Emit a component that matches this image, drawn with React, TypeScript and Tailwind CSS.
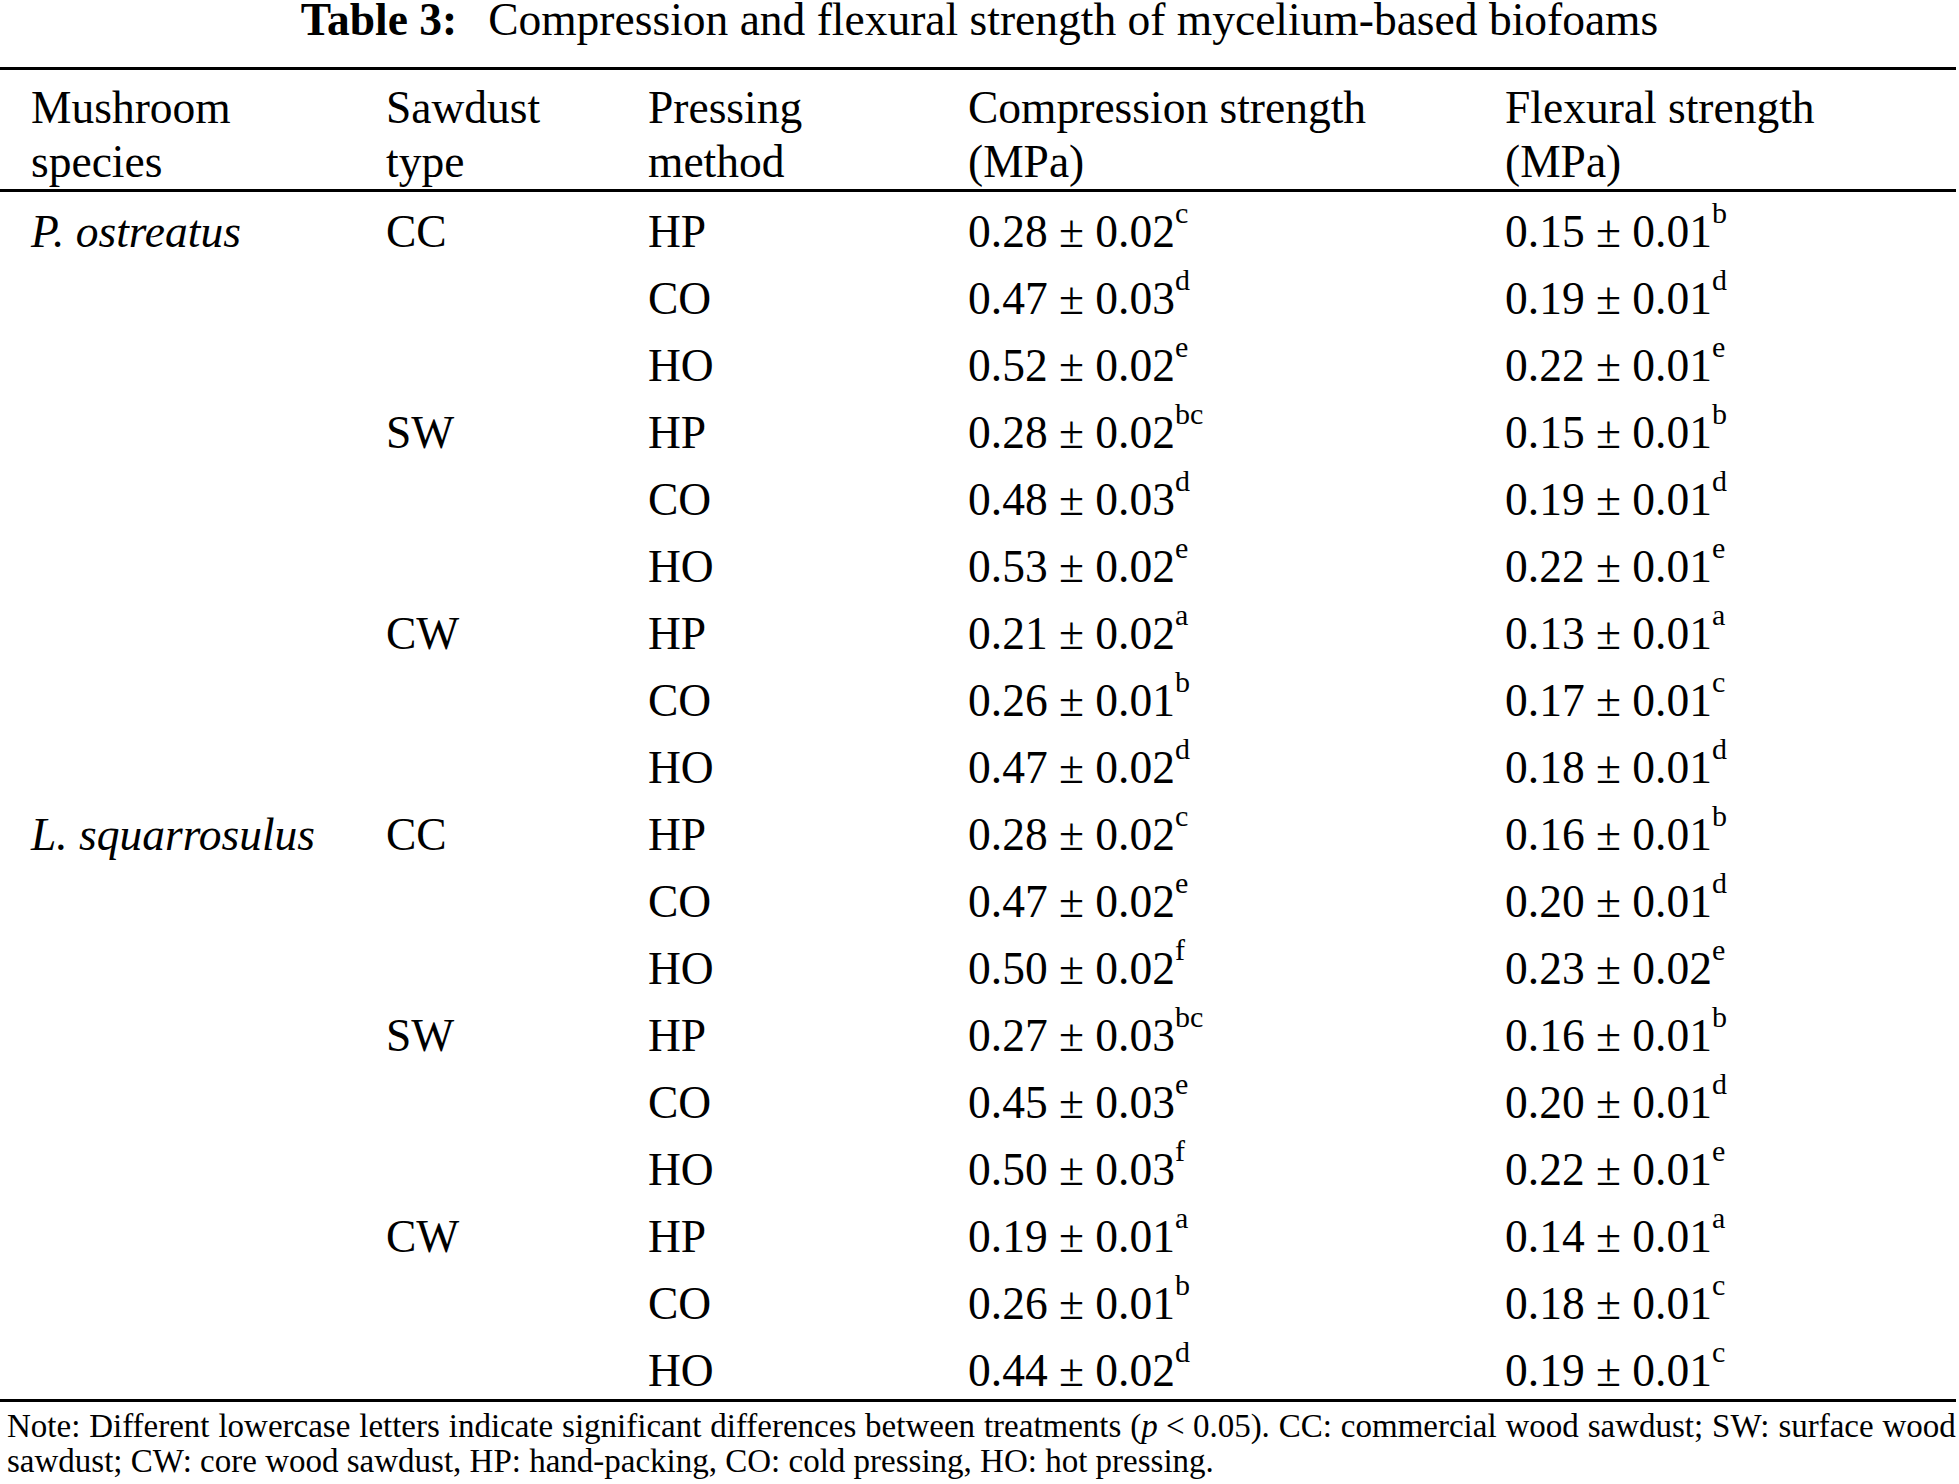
import React from "react";

type Row = {
  species?: string;
  sawdust?: string;
  method: string;
  comp: string;
  compSup: string;
  flex: string;
  flexSup: string;
};

const rows: Row[] = [
  { species: "P. ostreatus", sawdust: "CC", method: "HP", comp: "0.28 ± 0.02", compSup: "c", flex: "0.15 ± 0.01", flexSup: "b" },
  { method: "CO", comp: "0.47 ± 0.03", compSup: "d", flex: "0.19 ± 0.01", flexSup: "d" },
  { method: "HO", comp: "0.52 ± 0.02", compSup: "e", flex: "0.22 ± 0.01", flexSup: "e" },
  { sawdust: "SW", method: "HP", comp: "0.28 ± 0.02", compSup: "bc", flex: "0.15 ± 0.01", flexSup: "b" },
  { method: "CO", comp: "0.48 ± 0.03", compSup: "d", flex: "0.19 ± 0.01", flexSup: "d" },
  { method: "HO", comp: "0.53 ± 0.02", compSup: "e", flex: "0.22 ± 0.01", flexSup: "e" },
  { sawdust: "CW", method: "HP", comp: "0.21 ± 0.02", compSup: "a", flex: "0.13 ± 0.01", flexSup: "a" },
  { method: "CO", comp: "0.26 ± 0.01", compSup: "b", flex: "0.17 ± 0.01", flexSup: "c" },
  { method: "HO", comp: "0.47 ± 0.02", compSup: "d", flex: "0.18 ± 0.01", flexSup: "d" },
  { species: "L. squarrosulus", sawdust: "CC", method: "HP", comp: "0.28 ± 0.02", compSup: "c", flex: "0.16 ± 0.01", flexSup: "b" },
  { method: "CO", comp: "0.47 ± 0.02", compSup: "e", flex: "0.20 ± 0.01", flexSup: "d" },
  { method: "HO", comp: "0.50 ± 0.02", compSup: "f", flex: "0.23 ± 0.02", flexSup: "e" },
  { sawdust: "SW", method: "HP", comp: "0.27 ± 0.03", compSup: "bc", flex: "0.16 ± 0.01", flexSup: "b" },
  { method: "CO", comp: "0.45 ± 0.03", compSup: "e", flex: "0.20 ± 0.01", flexSup: "d" },
  { method: "HO", comp: "0.50 ± 0.03", compSup: "f", flex: "0.22 ± 0.01", flexSup: "e" },
  { sawdust: "CW", method: "HP", comp: "0.19 ± 0.01", compSup: "a", flex: "0.14 ± 0.01", flexSup: "a" },
  { method: "CO", comp: "0.26 ± 0.01", compSup: "b", flex: "0.18 ± 0.01", flexSup: "c" },
  { method: "HO", comp: "0.44 ± 0.02", compSup: "d", flex: "0.19 ± 0.01", flexSup: "c" },
];

const gridCols = "grid grid-cols-[355px_262px_320px_537px_1fr] pl-[31px]";

const Value = ({ v, sup }: { v: string; sup: string }) => (
  <span>
    {v}
    <sup className="text-[30px] -top-[24px]">{sup}</sup>
  </span>
);

export default function App() {
  return (
    <div className="w-[1959px] min-h-[1484px] bg-white text-black font-['Liberation_Serif','Times_New_Roman',serif]">
      {/* Caption */}
      <div className="flex justify-center text-[45.5px] leading-[39px] whitespace-nowrap">
        <span className="font-bold">Table 3:</span>
        <span className="ml-[31px]">Compression and flexural strength of mycelium-based biofoams</span>
      </div>

      <div className="mt-[28px] w-[1956px]">
        {/* Header */}
        <div className="border-t-[3px] border-b-[3px] border-black pt-[11px] text-[45.5px] leading-[54px]">
          <div className={gridCols}>
            <div>Mushroom<br />species</div>
            <div>Sawdust<br />type</div>
            <div>Pressing<br />method</div>
            <div>Compression strength<br />(MPa)</div>
            <div>Flexural strength<br />(MPa)</div>
          </div>
        </div>

        {/* Body */}
        <div className="flex flex-col gap-[17px] pt-[15px] pb-[3px] border-b-[3px] border-black text-[45.5px] leading-[50px]">
          {rows.map((r, i) => (
            <div key={i} className={gridCols}>
              <div className="italic">{r.species ?? ""}</div>
              <div>{r.sawdust ?? ""}</div>
              <div>{r.method}</div>
              <div><Value v={r.comp} sup={r.compSup} /></div>
              <div><Value v={r.flex} sup={r.flexSup} /></div>
            </div>
          ))}
        </div>

        {/* Note */}
        <div className="pt-[7px] pl-[7px] text-[33px] leading-[35px]">
          <div className="whitespace-nowrap flex justify-between">
            <span>Note:</span><span>Different</span><span>lowercase</span><span>letters</span><span>indicate</span>
            <span>significant</span><span>differences</span><span>between</span><span>treatments</span>
            <span>(<i>p</i> &lt; 0.05).</span><span>CC:</span><span>commercial</span><span>wood</span>
            <span>sawdust;</span><span>SW:</span><span>surface</span><span>wood</span>
          </div>
          <div>sawdust; CW: core wood sawdust, HP: hand-packing, CO: cold pressing, HO: hot pressing.</div>
        </div>
      </div>
    </div>
  );
}
